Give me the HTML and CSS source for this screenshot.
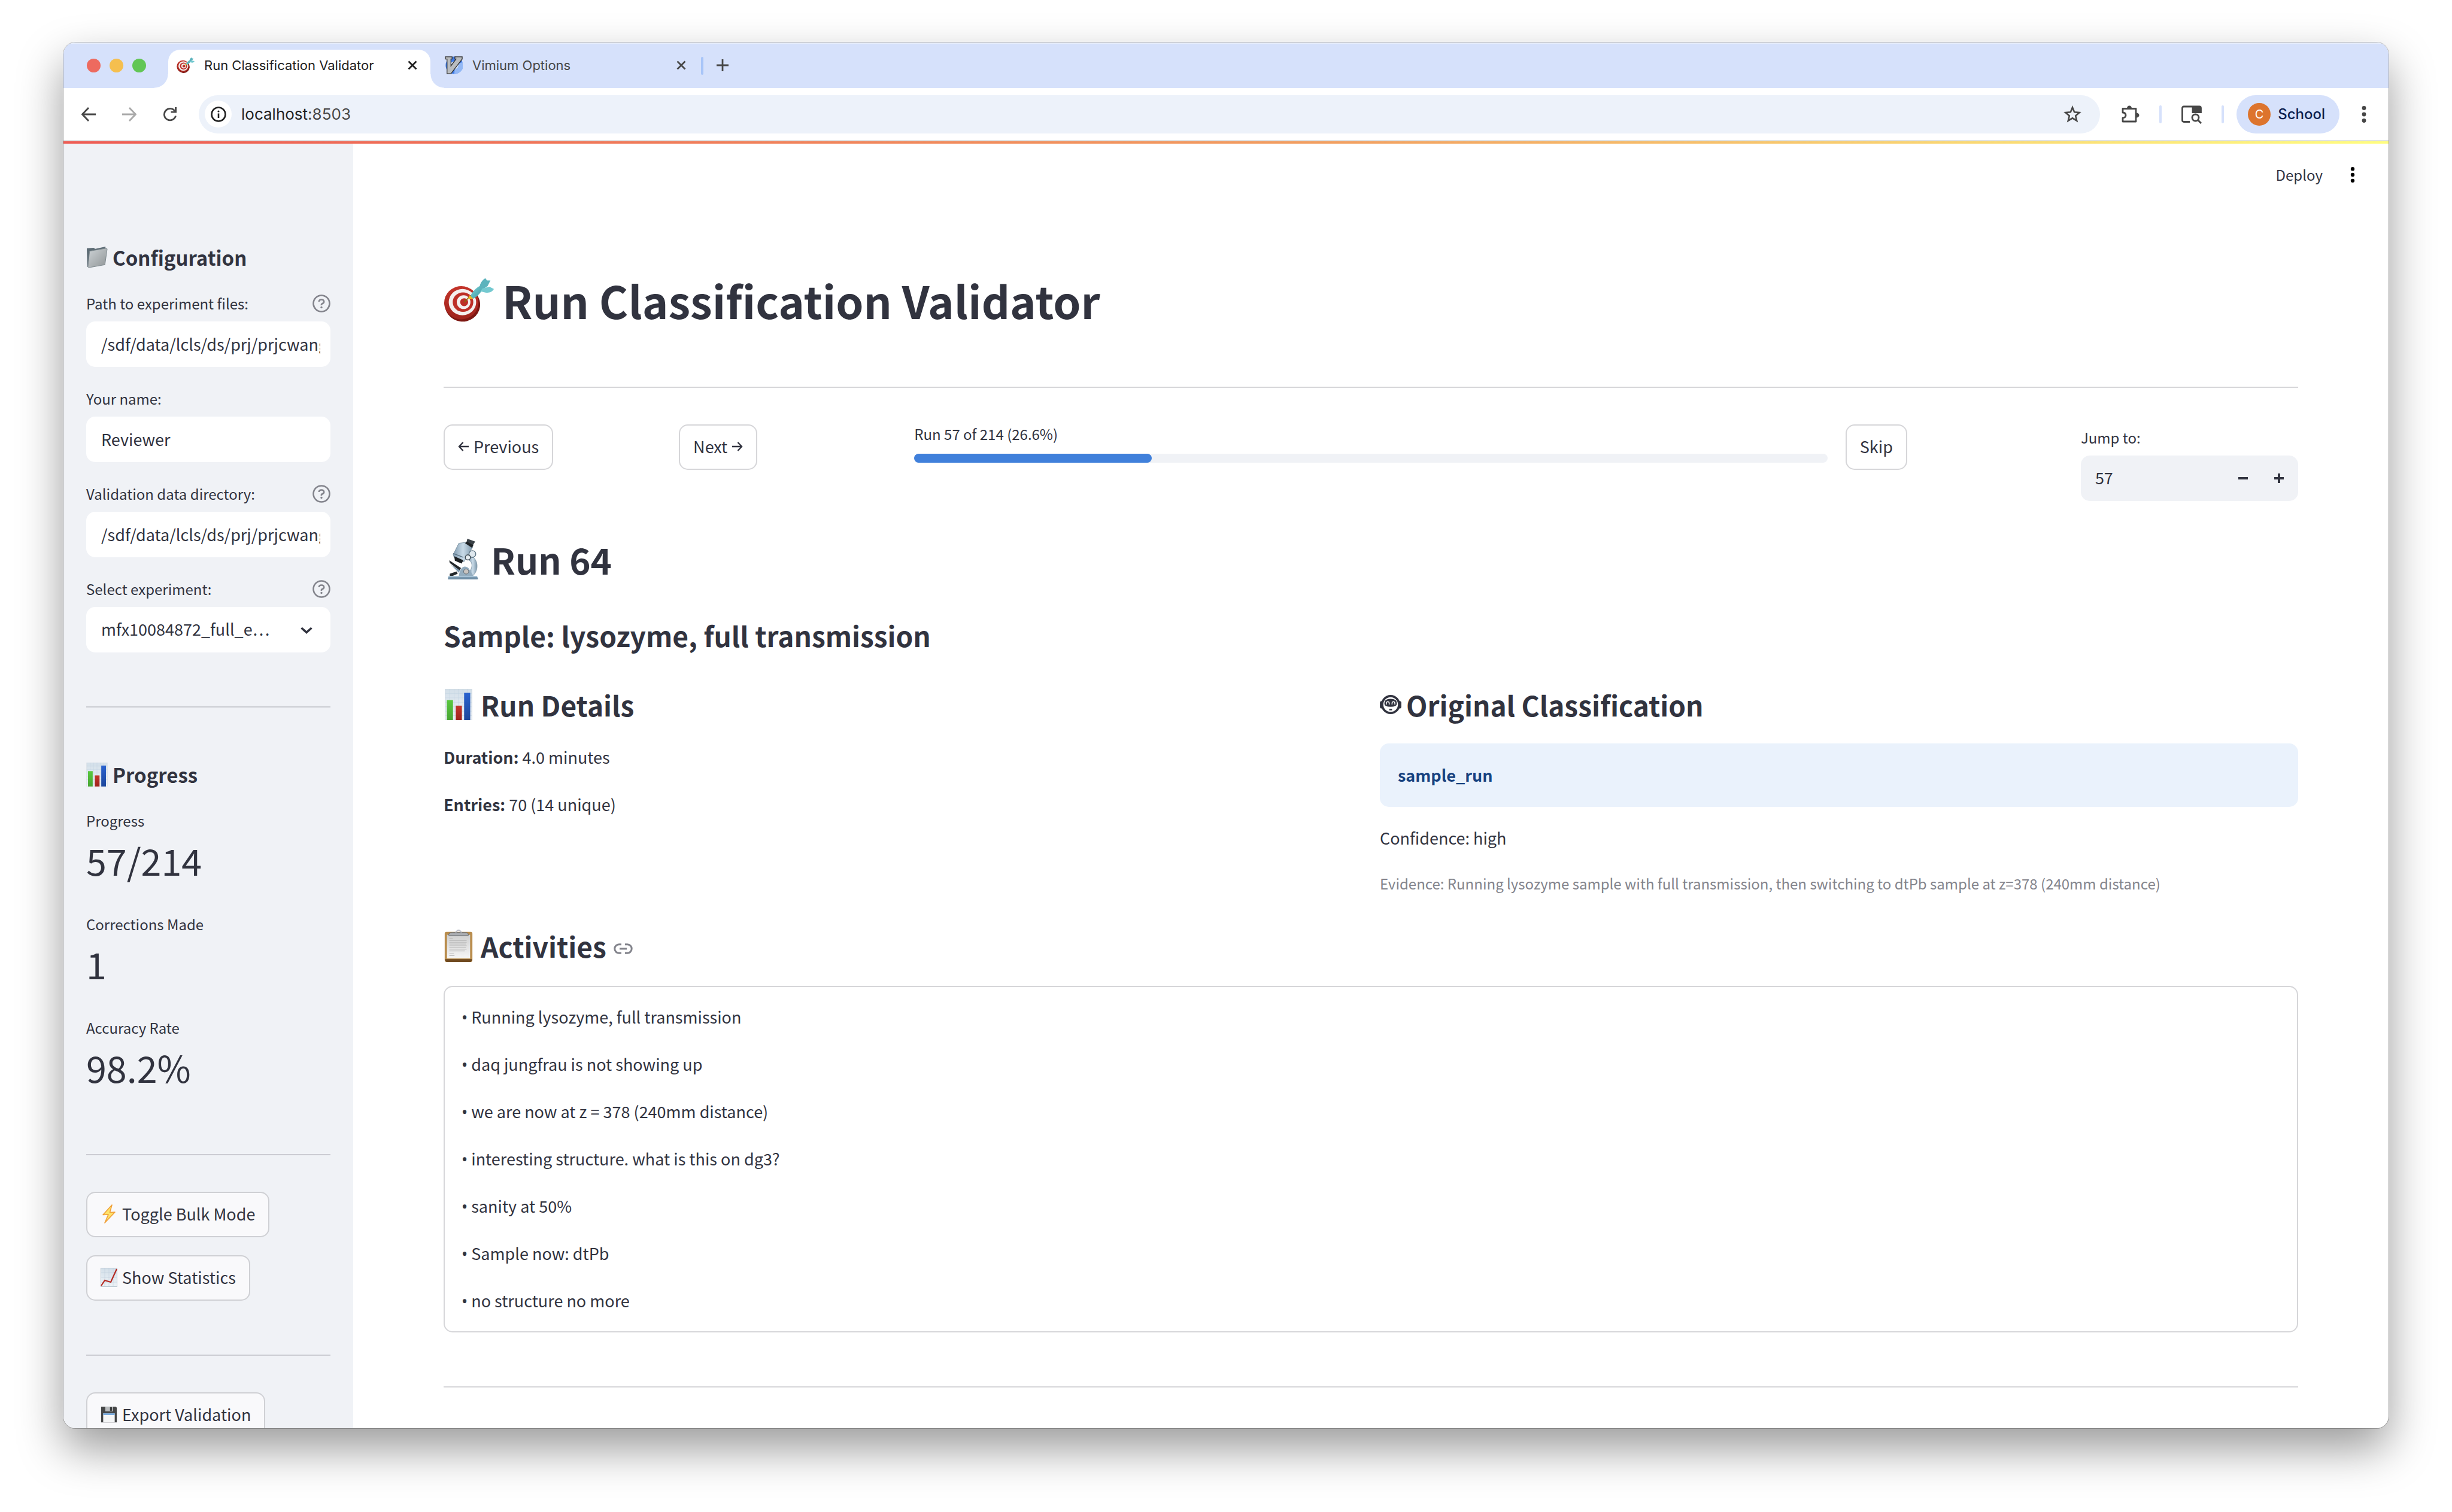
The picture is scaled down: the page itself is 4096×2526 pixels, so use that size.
FILE: index.html
```html
<!DOCTYPE html>
<html lang="en">
<head>
<meta charset="utf-8">
<title>Run Classification Validator</title>
<link rel="stylesheet" href="styles.css">
</head>
<body>
<svg class="defs" aria-hidden="true">
  <defs>
    <linearGradient id="gFolder" x1="0" y1="0" x2="1" y2="1"><stop offset="0" stop-color="#cdd3d6"/><stop offset="1" stop-color="#909597"/></linearGradient>
    <linearGradient id="gPaper" x1="0" y1="0" x2="0" y2="1"><stop offset="0" stop-color="#d3dfe9"/><stop offset="1" stop-color="#eef3f7"/></linearGradient>
    <linearGradient id="gGreen" x1="0" y1="0" x2="0" y2="1"><stop offset="0" stop-color="#5ac83f"/><stop offset="1" stop-color="#48a534"/></linearGradient>
    <linearGradient id="gBlue" x1="0" y1="0" x2="0" y2="1"><stop offset="0" stop-color="#2a62cf"/><stop offset="1" stop-color="#1d479b"/></linearGradient>
    <linearGradient id="gRed" x1="0" y1="0" x2="0" y2="1"><stop offset="0" stop-color="#c4342a"/><stop offset="1" stop-color="#9f231c"/></linearGradient>
    <linearGradient id="gSteel" x1="0" y1="0" x2="1" y2="0"><stop offset="0" stop-color="#7f9ab0"/><stop offset=".5" stop-color="#c9dbe8"/><stop offset="1" stop-color="#7d97aa"/></linearGradient>
    <linearGradient id="gTeal" x1="0" y1="0" x2="1" y2="1"><stop offset="0" stop-color="#7fd3d8"/><stop offset="1" stop-color="#3b98a2"/></linearGradient>
    <linearGradient id="gSheet" x1="0" y1="0" x2="0" y2="1"><stop offset="0" stop-color="#cfcfcf"/><stop offset="1" stop-color="#f6f6f6"/></linearGradient>
    <symbol id="dart" viewBox="0 0 88 76">
      <ellipse cx="33" cy="46" rx="31" ry="30" fill="#7d1712" transform="rotate(8 33 46)"/>
      <ellipse cx="31" cy="43" rx="30" ry="29" fill="url(#gRed)"/>
      <ellipse cx="33" cy="42" rx="24" ry="23" fill="#f4efee"/>
      <ellipse cx="34" cy="42" rx="18" ry="17" fill="#bd2f27"/>
      <ellipse cx="35" cy="42" rx="12" ry="12" fill="#f4efee"/>
      <ellipse cx="36" cy="42" rx="7" ry="7" fill="#bd2f27"/>
      <path d="M36 42 48 30" stroke="#8a6a10" stroke-width="2"/>
      <path d="M43 36 45 30 53 34 48 37Z" fill="#e8b923"/>
      <path d="M47 31C50 24 57 16 65 13L68 20C64 27 58 33 52 36Z" fill="url(#gTeal)"/>
      <path d="M63 18C63 9 68 3 73 0L76 4 82 4 77 14 68 20Z" fill="#5cb3bd"/>
      <path d="M68 18 80 15 88 19C85 25 78 27 69 24L64 23Z" fill="#74c9d0"/>
    </symbol>
    <symbol id="folder" viewBox="0 0 38 38">
      <path d="M1 3 13 2 16 4 34 0V6L5 36H2Z" fill="#5d6c75"/>
      <path d="M6 8 35 3 37 4 33 32 5 37 3 36Z" fill="url(#gFolder)" stroke="#7b868c" stroke-width="1"/>
    </symbol>
    <symbol id="bars" viewBox="0 0 50 56">
      <rect x="1" y="0" width="48" height="56" fill="url(#gPaper)" stroke="#cfd8df" stroke-width="1"/>
      <path d="M1 8H49M1 16H49M1 24H49M1 32H49M1 40H49M1 48H49M9 0V56M17 0V56M25 0V56M33 0V56M41 0V56" stroke="#c2d3e2" stroke-width=".6"/>
      <rect x="4" y="20" width="11" height="36" fill="url(#gGreen)"/>
      <rect x="20" y="30" width="11" height="26" fill="url(#gRed)"/>
      <rect x="35" y="7" width="11" height="49" fill="url(#gBlue)"/>
    </symbol>
    <symbol id="trend" viewBox="0 0 28 32">
      <rect x=".5" y=".5" width="27" height="31" fill="url(#gPaper)" stroke="#b8c5cf"/>
      <path d="M.5 8H27.500M.5 16H27.500M.5 24H27.500M7 0V32M14 0V32M21 0V32" stroke="#b9cbd9" stroke-width=".5"/>
      <path d="M1 30 7 21 17 24 27 2" fill="none" stroke="#b52a22" stroke-width="2.200"/>
    </symbol>
    <symbol id="bolt" viewBox="0 0 28 32">
      <path d="M19 1 4 17.500 13 17 7 31 24 13 15.500 13.500Z" fill="#fde36b" stroke="#f0a13a" stroke-width="1.600" stroke-linejoin="round"/>
    </symbol>
    <symbol id="floppy" viewBox="0 0 32 32">
      <path d="M1 1H29L31 3V31H1Z" fill="#454647"/>
      <rect x="9" y="1" width="15" height="9" fill="#b9bcbe"/><rect x="18" y="2" width="4" height="7" fill="#3b3c3d"/>
      <rect x="5" y="14" width="22" height="17" fill="#f5f6f7"/><rect x="5" y="14" width="22" height="3" fill="#6ea4dd"/>
    </symbol>
    <symbol id="scope" viewBox="0 0 56 72">
      <path d="M42 30C56 38 55 58 44 66L37 60C45 52 45 42 38 38Z" fill="url(#gSteel)" stroke="#71889a" stroke-width=".7"/>
      <path d="M3 38 24 52 21 56 4 43Z" fill="#23282c"/>
      <path d="M6 46 22 56 20 60Z" fill="#7f9ab0"/>
      <path d="M20 8 36 6 45 14 29 41 12 34 10 28Z" fill="url(#gSteel)" stroke="#6c8393" stroke-width=".8"/>
      <path d="M12 31 28 38 25 44 13 39Z" fill="#1d2124"/>
      <path d="M10 26 28 33" stroke="#5d7484" stroke-width="1.500"/>
      <path d="M31 8 43 16 46 11 35 4Z" fill="#1f2326"/>
      <path d="M35 0 49 5 45 11 34 5Z" fill="#394046"/>
      <circle cx="44" cy="27" r="6" fill="#dfe8ee" stroke="#5f7686" stroke-width="1.500"/>
      <circle cx="36" cy="33" r="4.500" fill="#e6edf1" stroke="#3f4a52" stroke-width="1.500"/>
      <path d="M20 66C22 50 30 46 37 52L46 66Z" fill="#94adbf"/>
      <circle cx="33" cy="58" r="4.500" fill="#c9c4c0" stroke="#5a636b" stroke-width="1"/>
      <path d="M4 62 16 58 18 62 4 68Z" fill="#23282c"/>
      <path d="M2 66H52L54 71Q54 72 52 72H2Q0 72 1 70Z" fill="#6f8ea6"/>
      <path d="M2 66H52L53 68H1Z" fill="#a9c4d8"/>
    </symbol>
    <symbol id="clipboard" viewBox="0 0 50 56">
      <rect x="1" y="4" width="48" height="52" rx="3" fill="#b98d4d"/>
      <path d="M2 51H48V53Q48 56 45 56H5Q2 56 2 53Z" fill="#704a20"/>
      <rect x="5" y="9" width="40" height="41" fill="url(#gSheet)"/>
      <path d="M9 15H15M9 19H39M9 22H39M9 25H38M9 28H39M9 31H38M9 34H39M9 37H36M9 42H17M9 45H18" stroke="#b5b5b5" stroke-width="1"/>
      <path d="M8 9Q8 5 14 5H36Q42 5 42 9V10H8Z" fill="#a8abb0" stroke="#5f6368" stroke-width="1"/>
      <path d="M20 5Q25-3 30 5" fill="none" stroke="#b9bcc8" stroke-width="2"/>
    </symbol>
    <symbol id="robot" viewBox="0 0 38 34">
      <rect x="0" y="11" width="6" height="13" rx="3" fill="#31333f"/>
      <rect x="32" y="11" width="6" height="13" rx="3" fill="#31333f"/>
      <ellipse cx="19" cy="17" rx="15" ry="15" fill="#fff" stroke="#31333f" stroke-width="4"/>
      <path d="M8 14Q8 7 19 7T30 14V16Q30 21 19 21T8 16Z" fill="#31333f"/>
      <path d="M11.500 17V15Q11.500 12 14 12T16.500 15V17M21.500 17V15Q21.500 12 24 12T26.500 15V17" fill="none" stroke="#fff" stroke-width="1.600"/>
      <path d="M16.500 26H21.500" stroke="#31333f" stroke-width="2.600"/>
    </symbol>
    <symbol id="vimium" viewBox="0 0 32 32">
      <circle cx="17" cy="16" r="15.500" fill="#3f7be8"/>
      <path d="M18 16 32 10A15.500 15.500 0 0 1 17 31.500Z" fill="#93b8f5"/>
      <circle cx="17" cy="16" r="7" fill="#dfe9fb"/>
      <path d="M1 1H13V5H11V17L20 5H18V1H31V5L11 31H4V5H1Z" fill="#b9bcbf" stroke="#333" stroke-width="1.400"/>
    </symbol>
    <symbol id="cross" viewBox="0 0 16 16"><path d="M1.500 1.500 14.500 14.500M14.500 1.500 1.500 14.500" fill="none" stroke="currentColor" stroke-width="2.800"/></symbol>
    <symbol id="help" viewBox="0 0 30 30">
      <circle cx="15" cy="15" r="13.500" fill="none" stroke="currentColor" stroke-width="2.600"/>
      <path d="M10.800 12Q11 8.500 15 8.500T19.200 12Q19.200 14 16.800 15T15 18" fill="none" stroke="currentColor" stroke-width="2.600"/>
      <circle cx="15" cy="21.500" r="1.700" fill="currentColor"/>
    </symbol>
    <symbol id="left" viewBox="0 0 18 20"><path d="M8.500 3 2 10 8.500 17M2 10H18" fill="none" stroke="currentColor" stroke-width="2.400"/></symbol>
    <symbol id="right" viewBox="0 0 18 20"><path d="M9.500 3 16 10 9.500 17M16 10H0" fill="none" stroke="currentColor" stroke-width="2.400"/></symbol>
    <symbol id="dots" viewBox="0 0 8 30"><circle cx="4" cy="4.500" r="3.400"/><circle cx="4" cy="15" r="3.400"/><circle cx="4" cy="25.500" r="3.400"/></symbol>
  </defs>
</svg>

<div class="window">
  <header class="tabstrip">
    <div class="lights"><span class="light light-close"></span><span class="light light-min"></span><span class="light light-max"></span></div>
    <div class="tab tab-active">
      <svg class="favicon"><use href="#dart"/></svg>
      <span class="tab-title">Run Classification Validator</span>
      <button class="icon-btn" aria-label="Close tab"><svg width="16" height="16"><use href="#cross"/></svg></button>
    </div>
    <div class="tab">
      <svg class="favicon"><use href="#vimium"/></svg>
      <span class="tab-title">Vimium Options</span>
      <button class="icon-btn" aria-label="Close tab"><svg width="16" height="16"><use href="#cross"/></svg></button>
    </div>
    <span class="divider divider-tab"></span>
    <button class="icon-btn new-tab" aria-label="New tab"><svg width="20" height="20" viewBox="0 0 20 20"><path d="M10 0V20M0 10H20" stroke="currentColor" stroke-width="2.800"/></svg></button>
  </header>

  <div class="toolbar">
    <div class="nav-icons">
      <button class="icon-btn" aria-label="Back"><svg width="24" height="24" viewBox="0 0 24 24"><path d="M12 1 1.500 12 12 23M2 12H24" fill="none" stroke="currentColor" stroke-width="2.800"/></svg></button>
      <button class="icon-btn dim" aria-label="Forward"><svg width="24" height="24" viewBox="0 0 24 24"><path d="M12 1 22.500 12 12 23M22 12H0" fill="none" stroke="currentColor" stroke-width="2.800"/></svg></button>
      <button class="icon-btn" aria-label="Reload"><svg width="24" height="24" viewBox="0 0 24 24"><path d="M21.500 14.500A9.700 9.700 0 1 1 20 6.500" fill="none" stroke="currentColor" stroke-width="2.800"/><path d="M23 0V9.500H13.500V7H20V0Z" fill="currentColor"/></svg></button>
    </div>
    <div class="omnibox">
      <span class="site-info"><svg width="26" height="26" viewBox="0 0 26 26"><circle cx="13" cy="13" r="11.500" fill="none" stroke="currentColor" stroke-width="2.600"/><path d="M13 11.500V19" stroke="currentColor" stroke-width="2.600"/><circle cx="13" cy="8" r="1.600" fill="currentColor"/></svg></span>
      <span class="url">localhost<span class="port">:8503</span></span>
      <button class="icon-btn" aria-label="Bookmark"><svg width="30" height="30" viewBox="0 0 30 30"><path d="M15 3.500 18.200 11.300 26.600 12 20.200 17.500 22.200 25.700 15 21.300 7.800 25.700 9.800 17.500 3.400 12 11.800 11.300Z" fill="none" stroke="currentColor" stroke-width="2.600"/></svg></button>
    </div>
    <div class="actions">
      <button class="icon-btn" aria-label="Extensions"><svg width="32" height="32" viewBox="0 0 32 32"><path d="M4 6.500H26V28H4V22Q9 21.500 9 17.500T4 13Z" fill="none" stroke="currentColor" stroke-width="2.800" stroke-linejoin="round"/><path d="M11 6A4 4.500 0 0 1 19 6ZM27 13.500A4.500 4 0 0 1 27 21.500Z" fill="currentColor"/></svg></button>
      <span class="divider"></span>
      <button class="icon-btn" aria-label="Search tabs"><svg width="34" height="32" viewBox="0 0 34 32"><path d="M14 28.500H4Q1.500 28.500 1.500 26V5.500Q1.500 3 4 3H30Q32.500 3 32.500 5.500V12.500H19V4" fill="none" stroke="currentColor" stroke-width="2.800"/><path d="M19 3H33V13H19Z" fill="currentColor"/><circle cx="23.500" cy="21.500" r="5.500" fill="none" stroke="currentColor" stroke-width="2.800"/><path d="M27.500 25.500 33 31" stroke="currentColor" stroke-width="3"/></svg></button>
      <span class="divider"></span>
      <button class="profile"><span class="avatar">C</span>School</button>
      <button class="icon-btn" aria-label="Menu"><svg width="8" height="30" fill="currentColor"><use href="#dots"/></svg></button>
    </div>
  </div>

  <div class="rainbow"></div>

  <div class="app">
    <aside class="sidebar">
      <h3 class="side-title"><svg width="36" height="36"><use href="#folder"/></svg>Configuration</h3>
      <div class="fields">
        <div class="field">
          <div class="label-row"><label for="path">Path to experiment files:</label><svg class="help"><use href="#help"/></svg></div>
          <input class="control" id="path" type="text" value="/sdf/data/lcls/ds/prj/prjcwang31">
        </div>
        <div class="field">
          <div class="label-row"><label for="name">Your name:</label></div>
          <input class="control" id="name" type="text" value="Reviewer">
        </div>
        <div class="field">
          <div class="label-row"><label for="dir">Validation data directory:</label><svg class="help"><use href="#help"/></svg></div>
          <input class="control" id="dir" type="text" value="/sdf/data/lcls/ds/prj/prjcwang31">
        </div>
        <div class="field">
          <div class="label-row"><label for="exp">Select experiment:</label><svg class="help"><use href="#help"/></svg></div>
          <div class="select-box">
            <select class="control" id="exp"><option>mfx10084872_full_e…</option></select>
            <svg class="chevron" viewBox="0 0 20 12"><path d="M1.500 2 10 9.500 18.500 2" fill="none" stroke="#31333f" stroke-width="3.600"/></svg>
          </div>
        </div>
      </div>
      <hr class="side-rule">
      <h3 class="side-title spaced"><svg width="36" height="40"><use href="#bars"/></svg>Progress</h3>
      <div class="metrics">
        <div><div class="metric-label">Progress</div><div class="metric-value">57/214</div></div>
        <div><div class="metric-label">Corrections Made</div><div class="metric-value">1</div></div>
        <div><div class="metric-label">Accuracy Rate</div><div class="metric-value">98.2%</div></div>
      </div>
      <hr class="side-rule rule-low">
      <div class="side-buttons">
        <button class="btn side-btn"><svg width="28" height="32"><use href="#bolt"/></svg>Toggle Bulk Mode</button>
        <button class="btn side-btn"><svg width="28" height="32"><use href="#trend"/></svg>Show Statistics</button>
      </div>
      <hr class="side-rule">
      <div class="side-buttons">
        <button class="btn side-btn"><svg width="28" height="32"><use href="#floppy"/></svg>Export Validation</button>
      </div>
    </aside>

    <main class="main">
      <div class="app-bar"><button class="deploy">Deploy</button><button class="icon-btn app-menu" aria-label="App menu"><svg width="8" height="28"><use href="#dots"/></svg></button></div>
      <div class="content">
        <h1><svg width="84" height="74"><use href="#dart"/></svg>Run Classification Validator</h1>
        <hr class="rule">
        <div class="run-nav">
          <div><button class="btn"><svg width="18" height="20"><use href="#left"/></svg>Previous</button></div>
          <div><button class="btn">Next<svg width="18" height="20"><use href="#right"/></svg></button></div>
          <div class="run-progress">
            <div class="progress-label" id="run-progress">Run 57 of 214 (26.6%)</div>
            <div class="track" role="progressbar" aria-labelledby="run-progress" aria-valuenow="26" aria-valuemin="0" aria-valuemax="100"><div class="fill" style="width:26%"></div></div>
          </div>
          <div><button class="btn">Skip</button></div>
          <div class="jump">
            <label for="jump">Jump to:</label>
            <div class="number">
              <input id="jump" type="number" value="57">
              <button class="icon-btn step" aria-label="Decrease"><svg width="16" height="16" viewBox="0 0 16 16"><path d="M0 8H16" stroke="currentColor" stroke-width="4"/></svg></button>
              <button class="icon-btn step" aria-label="Increase"><svg width="16" height="16" viewBox="0 0 16 16"><path d="M0 8H16M8 0V16" stroke="currentColor" stroke-width="4"/></svg></button>
            </div>
          </div>
        </div>
        <h2><svg width="66" height="68"><use href="#scope"/></svg>Run 64</h2>
        <h3 class="sample">Sample: lysozyme, full transmission</h3>
        <div class="details">
          <section>
            <h3><svg width="50" height="52"><use href="#bars"/></svg>Run Details</h3>
            <div class="facts">
              <p><strong>Duration:</strong> 4.0 minutes</p>
              <p><strong>Entries:</strong> 70 (14 unique)</p>
            </div>
          </section>
          <section>
            <h3 class="robot-title"><svg width="36" height="32"><use href="#robot"/></svg>Original Classification</h3>
            <div class="callout">sample_run</div>
            <p class="confidence">Confidence: high</p>
            <p class="evidence">Evidence: Running lysozyme sample with full transmission, then switching to dtPb sample at z=378 (240mm distance)</p>
          </section>
        </div>
        <h3 class="activities-title"><svg width="50" height="54"><use href="#clipboard"/></svg>Activities<a href="#activities" aria-label="Link to heading" class="anchor"><svg width="32" height="18" viewBox="0 0 32 18"><path d="M13 1.800H9A7.200 7.200 0 0 0 9 16.200H13M19 1.800H23A7.200 7.200 0 0 1 23 16.200H19M10 9H22" fill="none" stroke="currentColor" stroke-width="3"/></svg></a></h3>
        <div class="activities" id="activities">
          <p><span class="bullet">•</span> Running lysozyme, full transmission</p>
          <p><span class="bullet">•</span> daq jungfrau is not showing up</p>
          <p><span class="bullet">•</span> we are now at z = 378 (240mm distance)</p>
          <p><span class="bullet">•</span> interesting structure. what is this on dg3?</p>
          <p><span class="bullet">•</span> sanity at 50%</p>
          <p><span class="bullet">•</span> Sample now: dtPb</p>
          <p><span class="bullet">•</span> no structure no more</p>
        </div>
        <hr class="rule rule-end">
      </div>
    </main>
  </div>
</div>
</body>
</html>
```
FILE: styles.css
```css
* { box-sizing: border-box; margin: 0; padding: 0; }

body {
  height: 100vh;
  padding: 71px 106px 140px;
  overflow: hidden;
  background: #fff;
  color: #31333f;
  font: 400 27px/48px "Noto Sans CJK SC", "Noto Sans", sans-serif;
}

button, input, select { font: inherit; color: inherit; border: 0; background: none; }
svg { display: block; flex: none; }
.defs { position: absolute; width: 0; height: 0; }
hr { border: 0; height: 2px; }

.window {
  display: flex;
  flex-direction: column;
  height: 100%;
  overflow: hidden;
  border-radius: 20px;
  background: #fff;
  box-shadow: 0 0 0 1px rgba(0, 0, 0, .25), 0 34px 76px rgba(0, 0, 0, .4);
}

/* Browser chrome */
.tabstrip {
  display: flex;
  align-items: flex-end;
  flex: none;
  height: 76px;
  padding-left: 39px;
  background: #d6e1fb;
  box-shadow: inset 0 2px #e9f0fd;
  font-family: Inter, sans-serif;
  font-size: 22px;
  color: #474747;
}
.lights { display: flex; gap: 15px; padding-right: 37px; margin-bottom: 26px; }
.light { width: 23px; height: 23px; border-radius: 50%; }
.light-close { background: #ed6a5f; }
.light-min { background: #f5bf4f; }
.light-max { background: #62c655; }

.tab {
  display: flex;
  align-items: center;
  width: 449px;
  height: 64px;
  padding: 0 22px 12px 24px;
}
.tab-active {
  position: relative;
  width: 438px;
  padding-left: 14px;
  border-radius: 20px 20px 0 0;
  background: #fff;
  color: #1f1f1f;
}
.tab-active::before, .tab-active::after {
  content: "";
  position: absolute;
  bottom: 0;
  width: 23px;
  height: 23px;
}
.tab-active::before { right: 100%; background: radial-gradient(circle at 0 0, transparent 22px, #fff 23px); }
.tab-active::after { left: 100%; background: radial-gradient(circle at 100% 0, transparent 22px, #fff 23px); }
.favicon { width: 30px; height: 30px; margin-right: 16px; }
.tab-title { flex: 1; white-space: nowrap; }
.icon-btn { display: flex; align-items: center; justify-content: center; }
.divider { width: 4px; height: 30px; border-radius: 2px; background: #d6e1fb; }
.divider-tab { margin: 0 22px 22px 3px; background: #a8c5f8; }
.new-tab { margin-bottom: 28px; }

.toolbar {
  display: flex;
  align-items: center;
  flex: none;
  height: 89px;
  padding: 0 37px 0 30px;
  border-bottom: 2px solid #dfe2e3;
  background: #fff;
  font-family: Inter, sans-serif;
  font-size: 26px;
  color: #474747;
}
.nav-icons { display: flex; gap: 44px; }
.dim { color: #a9a9a9; }
.omnibox {
  display: flex;
  align-items: center;
  flex: 1;
  height: 64px;
  margin: 0 34px 0 36px;
  padding: 0 31px 0 10px;
  border-radius: 32px;
  background: #edf2fa;
}
.site-info {
  display: flex;
  align-items: center;
  justify-content: center;
  width: 45px;
  height: 45px;
  border-radius: 50%;
  background: #fff;
  color: #1f1f1f;
}
.url { flex: 1; margin-left: 16px; color: #1f1f1f; }
.port { color: #474747; }
.actions { display: flex; align-items: center; gap: 33px; }
.profile {
  display: flex;
  align-items: center;
  gap: 12px;
  height: 64px;
  margin: 0 4px 0 -12px;
  padding: 0 24px 0 19px;
  border-radius: 32px;
  background: #d6e1fb;
  color: #0b1f50;
  font-size: 24px;
  font-weight: 500;
}
.avatar {
  width: 38px;
  height: 38px;
  border-radius: 50%;
  background: #dd742d;
  color: #fff;
  font-size: 20px;
  font-weight: 400;
  line-height: 38px;
}
.rainbow { flex: none; height: 4px; background: linear-gradient(90deg, #ee5c54, #f2a061 55%, #fffd80); }

/* App */
.app { display: flex; flex: 1; min-height: 0; }

.sidebar {
  flex: none;
  width: 484px;
  padding: 167px 38px 0;
  overflow: hidden;
  background: #f0f2f6;
}
.side-title {
  display: flex;
  align-items: center;
  gap: 8px;
  font-size: 33px;
  font-weight: 600;
  line-height: 46px;
}
.fields { display: grid; gap: 30px; margin-top: 31px; }
.field { display: grid; gap: 8px; }
.label-row {
  display: flex;
  align-items: center;
  justify-content: space-between;
  height: 45px;
  font-size: 24px;
  line-height: 45px;
}
.help { width: 30px; height: 30px; color: #83848c; }
.control {
  width: 100%;
  height: 76px;
  padding: 0 17px 2px 25px;
  border-radius: 15px;
  background: #fff;
  appearance: none;
}
.select-box { position: relative; }
.select-box .control { display: block; }
.chevron { position: absolute; top: 33px; right: 30px; width: 20px; height: 12px; }
.side-rule { margin-top: 90px; background: #cbccd2; }
.rule-low { margin-top: 107px; }
.spaced { margin-top: 89px; }
.metrics { display: grid; gap: 50px; margin-top: 35px; }
.metric-label { font-size: 24px; line-height: 38px; }
.metric-value { margin-top: 9px; font-size: 61px; line-height: 76px; }
.side-buttons { display: flex; flex-direction: column; align-items: flex-start; gap: 30px; margin-top: 61px; }

.btn {
  display: inline-flex;
  align-items: center;
  gap: 8px;
  height: 76px;
  padding: 0 22px 2px;
  border: 2px solid #d6d6d9;
  border-radius: 15px;
  white-space: nowrap;
}
.side-btn { border-color: #cfd0d4; background: #f9f9fb; }

.main { flex: 1; min-width: 0; overflow: hidden; }
.app-bar {
  display: flex;
  align-items: center;
  justify-content: flex-end;
  gap: 46px;
  height: 104px;
  padding-right: 56px;
}
.deploy { font-size: 24px; }
.content { padding: 107px 151px 0; }

h1, h2, h3 { display: flex; align-items: center; }
h1 { gap: 14px; font-size: 74px; font-weight: 700; line-height: 100px; }
h2 { gap: 13px; margin-top: 56px; font-size: 60px; font-weight: 600; line-height: 82px; }
h3 { gap: 12px; font-size: 46px; font-weight: 600; line-height: 64px; }

.rule { margin-top: 95px; background: #d6d6d9; }
.run-nav {
  display: grid;
  grid-template-columns: minmax(0, 363fr) minmax(0, 363fr) minmax(0, 1525fr) minmax(0, 363fr) minmax(0, 363fr);
  gap: 30px;
  margin-top: 61px;
}
.progress-label { font-size: 24px; line-height: 32px; }
.track { height: 15px; margin-top: 17px; border-radius: 8px; background: #f0f2f6; }
.fill { height: 100%; border-radius: 8px; background: #4080db; }
.jump label { display: block; font-size: 24px; line-height: 44px; }
.number {
  display: flex;
  height: 76px;
  margin-top: 8px;
  padding-right: 2px;
  border-radius: 15px;
  background: #f0f2f6;
}
.number input { flex: 1; min-width: 0; padding: 0 0 2px 24px; appearance: textfield; }
.number input::-webkit-inner-spin-button { display: none; }
.step { width: 60px; }

.sample { margin-top: 54px; }
.details { display: grid; grid-template-columns: 1fr 1fr; gap: 30px; margin-top: 52px; }
.facts { display: grid; gap: 31px; margin-top: 32px; }
strong { font-weight: 600; }
.robot-title { gap: 8px; }
.callout {
  margin-top: 33px;
  padding: 29px 30px;
  border-radius: 15px;
  background: #eaf2fc;
  color: #174280;
  font-weight: 600;
}
.confidence { margin-top: 28px; }
.evidence { margin-top: 31px; font-size: 24px; line-height: 42px; color: #83848c; }
.activities-title { margin-top: 51px; }
.anchor { margin-top: 10px; color: #83848c; }
.activities {
  display: grid;
  gap: 31px;
  margin-top: 35px;
  padding: 26px 28px 27px;
  border: 2px solid #d6d6d9;
  border-radius: 15px;
}
.bullet { font-family: "Noto Sans", sans-serif; line-height: 1; }
.rule-end { margin-top: 90px; }
```
